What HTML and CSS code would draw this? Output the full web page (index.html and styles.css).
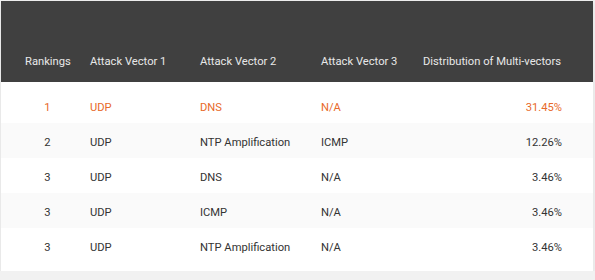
FILE: index.html
```html
<!DOCTYPE html>
<html lang="en">
<head>
    <meta charset="UTF-8">
    <meta name="viewport" content="width=device-width, initial-scale=1.0">
    <title>Multi-vector Rankings</title>
    <link rel="stylesheet" href="styles.css">
</head>
<body>
    <!-- 멀티벡터 순위 표 -->
    <div class="ranking-card">
        <table class="ranking-table">
            <colgroup>
                <col class="col-rank">
                <col class="col-v1">
                <col class="col-v2">
                <col class="col-v3">
                <col class="col-dist">
            </colgroup>
            <thead>
                <tr>
                    <th class="rank">Rankings</th>
                    <th>Attack Vector 1</th>
                    <th>Attack Vector 2</th>
                    <th>Attack Vector 3</th>
                    <th class="dist">Distribution of Multi-vectors</th>
                </tr>
            </thead>
            <tbody>
                <tr class="top">
                    <td class="rank">1</td>
                    <td>UDP</td>
                    <td>DNS</td>
                    <td>N/A</td>
                    <td class="dist">31.45%</td>
                </tr>
                <tr>
                    <td class="rank">2</td>
                    <td>UDP</td>
                    <td>NTP Amplification</td>
                    <td>ICMP</td>
                    <td class="dist">12.26%</td>
                </tr>
                <tr>
                    <td class="rank">3</td>
                    <td>UDP</td>
                    <td>DNS</td>
                    <td>N/A</td>
                    <td class="dist">3.46%</td>
                </tr>
                <tr>
                    <td class="rank">3</td>
                    <td>UDP</td>
                    <td>ICMP</td>
                    <td>N/A</td>
                    <td class="dist">3.46%</td>
                </tr>
                <tr>
                    <td class="rank">3</td>
                    <td>UDP</td>
                    <td>NTP Amplification</td>
                    <td>N/A</td>
                    <td class="dist">3.46%</td>
                </tr>
            </tbody>
        </table>
    </div>
</body>
</html>
```

FILE: styles.css
```css
* {
    margin: 0;
    padding: 0;
    box-sizing: border-box;
}

body {
    font-family: Roboto, 'Liberation Sans', sans-serif;
    background-color: #f1f1f1;
    padding: 1px 2px 0 1px;
}

/* 카드 */
.ranking-card {
    background-color: white;
    box-shadow: 0 2px 6px rgba(0, 0, 0, 0.08);
    padding-bottom: 8px;
}

.ranking-table {
    width: 100%;
    border-collapse: collapse;
    table-layout: fixed;
    font-size: 11.2px;
}

.col-rank { width: 79px; }
.col-v1 { width: 110px; }
.col-v2 { width: 121px; }
.col-v3 { width: 102px; }

/* 헤더 */
.ranking-table thead tr {
    background-color: #404040;
}

.ranking-table th {
    height: 81px;
    padding: 40px 10px 0;
    text-align: left;
    font-weight: normal;
    color: #e8e8e8;
    white-space: nowrap;
}

.ranking-table td {
    height: 35px;
    padding: 3px 10px 0;
    color: #333;
    white-space: nowrap;
}

.ranking-table tbody tr:nth-child(even) {
    background-color: #fafafa;
}

.ranking-table .rank {
    text-align: center;
    padding-left: 24px;
    padding-right: 10px;
}

.ranking-table .dist {
    text-align: right;
    padding-right: 31px;
}

.ranking-table th.dist {
    text-align: left;
}

/* 1위 행 */
.ranking-table tr.top td {
    height: 41px;
    padding-top: 9px;
    color: #e8692a;
}
```
